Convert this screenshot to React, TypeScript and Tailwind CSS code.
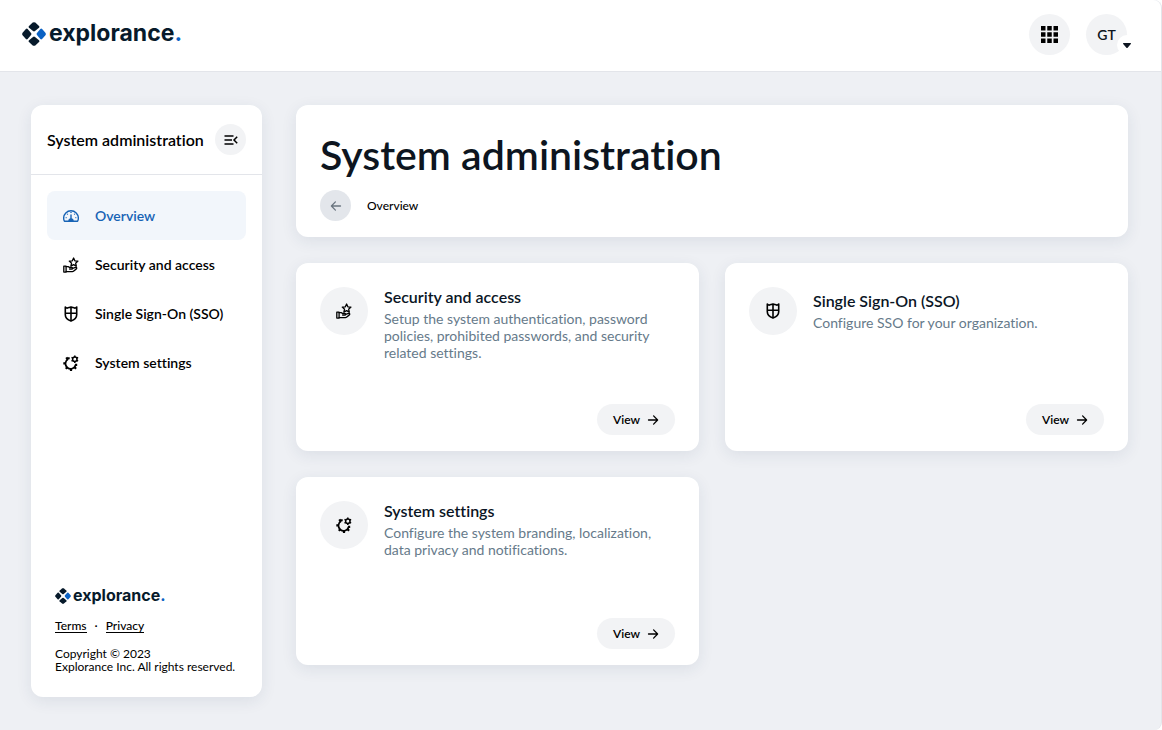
import type { ReactNode } from "react";

type IconProps = { className?: string };

function GaugeIcon({ className = "size-4" }: IconProps) {
  return (
    <svg viewBox="0 0 16 16" fill="none" stroke="currentColor" strokeWidth="1.400" className={className} aria-hidden="true">
      <path d="M1.400 13.200c-.5-.9-.75-1.900-.75-3.050a7.350 7.350 0 0 1 14.700 0c0 1.150-.25 2.150-.75 3.050z" strokeLinejoin="round" />
      <path d="M8 7v4" strokeLinecap="round" />
      <path d="M6 13a2 2 0 0 1 4 0" fill="currentColor" />
      <path d="M8 4.100v.9M4.200 5.900l.6.6M11.800 5.900l-.6.6M2.700 9.700h.9M12.400 9.700h.9" strokeWidth="1.300" />
    </svg>
  );
}

function HandStarIcon({ className = "size-4" }: IconProps) {
  return (
    <svg viewBox="0 0 16 16" fill="none" stroke="currentColor" strokeWidth="1.300" strokeLinejoin="round" strokeLinecap="round" className={className} aria-hidden="true">
      <path d="M10.600 1l1.250 2.800 3.100.3-2.300 2.050.7 3-2.750-1.550-2.750 1.550.7-3-2.300-2.050 3.100-.3z" />
      <path d="M.8 9.200h2.300v5.900H.8z" />
      <path d="M3.100 9.700h2.100l1.300.6h2.200c1.200 0 1.200 1.700 0 1.700H6.600" />
      <path d="M9.600 11.300l2.900-1c1.200-.3 1.700 1 .8 1.600-1.300.9-2.300 2.700-3.800 2.700H3.100" />
    </svg>
  );
}

function ShieldIcon({ className = "size-4" }: IconProps) {
  return (
    <svg viewBox="0 0 16 16" fill="none" stroke="currentColor" strokeWidth="1.600" strokeLinejoin="round" className={className} aria-hidden="true">
      <path d="M2.300 1c.9 1.300 2 1.300 2.850.7.850-.2 2-.2 2.850-.7.850.5 2 .5 2.850.7.850.6 1.950.6 2.850-.7v7.800c0 3.100-2.300 5.200-5.700 6.300-3.400-1.100-5.700-3.200-5.700-6.300z" />
      <path d="M8 1v14M2.300 7.300h11.400" />
    </svg>
  );
}

function GearsIcon({ className = "size-4" }: IconProps) {
  return (
    <svg viewBox="0 0 16 16" fill="none" stroke="currentColor" className={className} aria-hidden="true">
      <path d="M5.200 4A5.200 5.200 0 1 0 12.700 9.700" strokeWidth="1.800" />
      <path d="M4.600 4.400L3.300 2.400M2.700 8.300H.3M4.200 12.100l-1.300 1.800M8 13.500V16M11.400 12l1.700 1.700M12 9.900h2.200M5.600 4.300V2.300" strokeWidth="2.200" />
      <circle cx="11.800" cy="4.300" r="2.200" strokeWidth="1.500" />
      <path d="M11.800 2V.500M11.800 8.100V6.600M9.800 3.150l-1.300-.75M15.100 6.200l-1.300-.75M9.800 5.450l-1.300.75M15.100 2.400l-1.300.75" strokeWidth="1.500" />
    </svg>
  );
}

function ArrowIcon({ className = "" }: IconProps) {
  return (
    <svg viewBox="0 0 12 12" fill="none" stroke="currentColor" strokeWidth="1.300" strokeLinecap="round" strokeLinejoin="round" className={`size-3 ${className}`} aria-hidden="true">
      <path d="M1.500 6h9M6.600 1.900L10.600 6l-4 4.100" />
    </svg>
  );
}

function LogoMark({ className }: IconProps) {
  return (
    <svg viewBox="0 0 24 24" className={className} aria-hidden="true">
      <g fill="#071a2b">
        <path d="M10.700.6q1.300-.9 2.600 0L17 3.900q.8.900 0 1.800L13 9q-1 .8-2 0L7 5.700q-.8-.9 0-1.800z" />
        <path d="M10.700 23.400q1.300.9 2.600 0l3.700-3.300q.8-.9 0-1.800L13 15q-1-.8-2 0l-4 3.300q-.8.900 0 1.800z" />
        <path d="M.6 10.700q-.9 1.300 0 2.600L3.900 17q.9.800 1.800 0L9 13q.8-1 0-2L5.700 7q-.9-.8-1.800 0z" />
      </g>
      <path fill="#0b62c4" d="M23.400 10.700q.9 1.300 0 2.600L20.100 17q-.9.800-1.800 0L15 13q-.8-1 0-2l3.300-4q.9-.8 1.800 0z" />
    </svg>
  );
}

const sections: {
  title: string;
  description: string;
  icon: ReactNode;
}[] = [
  {
    title: "Security and access",
    description: "Setup the system authentication, password policies, prohibited passwords, and security related settings.",
    icon: <HandStarIcon />,
  },
  {
    title: "Single Sign-On (SSO)",
    description: "Configure SSO for your organization.",
    icon: <ShieldIcon />,
  },
  {
    title: "System settings",
    description: "Configure the system branding, localization, data privacy and notifications.",
    icon: <GearsIcon />,
  },
];

function TopBar() {
  return (
    <header className="flex h-[72px] items-center justify-between rounded-tr-lg border-b border-[#e3e5ea] bg-white pr-[34px] pl-[22px]">
      <a href="#" className="flex items-center gap-[3px] pb-1 font-['Inter'] text-[23px] leading-7 font-bold text-[#071a2b]">
        <LogoMark className="size-6" />
        <span className="pb-0.5">
          explorance<span className="text-[#0b62c4]">.</span>
        </span>
      </a>
      <div className="flex items-center gap-4 pb-0.5">
        <button type="button" aria-label="Applications" className="flex size-[41px] items-center justify-center rounded-full bg-[#f2f3f5]">
          <svg viewBox="0 0 17 17" className="size-[17px]" aria-hidden="true">
            <path d="M0 0h4.500v4.500H0zM6.250 0h4.500v4.500h-4.500zM12.500 0H17v4.500h-4.500zM0 6.250h4.500v4.500H0zM6.250 6.250h4.500v4.500h-4.500zM12.500 6.250H17v4.500h-4.500zM0 12.500h4.500V17H0zM6.250 12.500h4.500V17h-4.500zM12.500 12.500H17V17h-4.500z" />
          </svg>
        </button>
        <button type="button" aria-label="GT account menu" className="relative flex size-[41px] items-center justify-center rounded-full bg-[#f2f3f5] text-sm font-semibold text-[#0d1520]">
          GT
          <span className="absolute -right-2.5 bottom-0 flex size-5 items-center justify-center rounded-full bg-white">
            <svg viewBox="0 0 8 5" className="h-[5px] w-2" fill="#0d1520" aria-hidden="true">
              <path d="M.5 0h7q.8.300.3 1L4.600 4.700q-.6.500-1.200 0L.2 1Q-.3.300.5 0z" />
            </svg>
          </span>
        </button>
      </div>
    </header>
  );
}

function Sidebar() {
  return (
    <aside className="flex w-[231px] shrink-0 flex-col rounded-xl bg-white shadow-[0_4px_16px_rgba(30,50,90,0.09)]">
      <div className="flex h-[70px] items-center justify-between border-b border-[#e3e5ea] px-4">
        <h2 className="text-base font-semibold whitespace-nowrap">System administration</h2>
        <button type="button" aria-label="Collapse menu" className="flex size-[31px] shrink-0 items-center justify-center rounded-full bg-[#f2f3f5]">
          <svg viewBox="0 0 14 10" className="h-2.5 w-3.5" fill="none" stroke="currentColor" strokeWidth="1.500" aria-hidden="true">
            <path d="M.5 1h9M.5 5h7.500M.5 9h9M13.200 1.800L10 5l3.200 3.200" />
          </svg>
        </button>
      </div>
      <nav className="px-4 pt-4 text-sm leading-[17px] font-semibold">
        <a href="#" aria-current="page" className="flex items-center gap-4 rounded-lg bg-[#f2f6fb] p-4 text-[#1763b5]">
          <GaugeIcon />
          Overview
        </a>
        {sections.map((section) => (
          <a key={section.title} href="#" className="flex items-center gap-4 rounded-lg p-4">
            {section.icon}
            {section.title}
          </a>
        ))}
      </nav>
      <footer className="mt-auto px-6 pb-6 text-xs leading-[13px]">
        <div className="flex items-center gap-0.5 font-['Inter'] text-base leading-5 font-bold text-[#071a2b]">
          <LogoMark className="size-4" />
          <span className="pb-0.5">
            explorance<span className="text-[#0b62c4]">.</span>
          </span>
        </div>
        <p className="mt-3 mb-3.5 flex gap-2 leading-[13px] font-medium">
          <a href="#" className="border-b border-black">Terms</a>
          <span>·</span>
          <a href="#" className="border-b border-black">Privacy</a>
        </p>
        <p>Copyright © 2023</p>
        <p className="whitespace-nowrap">Explorance Inc. All rights reserved.</p>
      </footer>
    </aside>
  );
}

export default function App() {
  return (
    <div className="flex min-h-screen flex-col rounded-r-lg border-r border-[#e3e5ea] bg-[#eef0f4] font-['Lato',sans-serif] text-black [font-variant-ligatures:none]">
      <TopBar />
      <div className="flex flex-1 gap-[34px] py-[33px] pr-[33px] pl-[31px]">
        <Sidebar />
        <main className="min-w-0 flex-1">
          <section className="rounded-xl bg-white px-6 pt-[25px] pb-4 shadow-[0_4px_16px_rgba(30,50,90,0.09)]">
            <h1 className="text-[41px] leading-[50px] font-semibold text-[#0d1520]">System administration</h1>
            <div className="mt-2.5 flex items-center gap-4">
              <button type="button" aria-label="Back" className="flex size-[31px] items-center justify-center rounded-full bg-[#e3e6eb] text-[#6b7680]">
                <ArrowIcon className="rotate-180" />
              </button>
              <span className="text-xs font-medium">Overview</span>
            </div>
          </section>
          <div className="mt-[26px] grid grid-cols-2 gap-[26px]">
            {sections.map((section) => (
              <article key={section.title} className="flex min-h-[188px] flex-col justify-between rounded-xl bg-white px-6 pt-6 pb-4 shadow-[0_4px_16px_rgba(30,50,90,0.09)]">
                <div className="flex gap-4">
                  <div className="flex size-12 shrink-0 items-center justify-center rounded-full bg-[#f2f3f5]">{section.icon}</div>
                  <div className="flex min-h-12 flex-col justify-center">
                    <h3 className="mb-[3px] text-base leading-5 font-semibold text-[#0a1524]">{section.title}</h3>
                    <p className="text-sm leading-[17px] text-[#667a8a]">{section.description}</p>
                  </div>
                </div>
                <button type="button" className="flex h-[31px] items-center gap-[7px] self-end rounded-full bg-[#f2f3f5] px-4 text-xs font-semibold">
                  View
                  <ArrowIcon />
                </button>
              </article>
            ))}
          </div>
        </main>
      </div>
    </div>
  );
}
